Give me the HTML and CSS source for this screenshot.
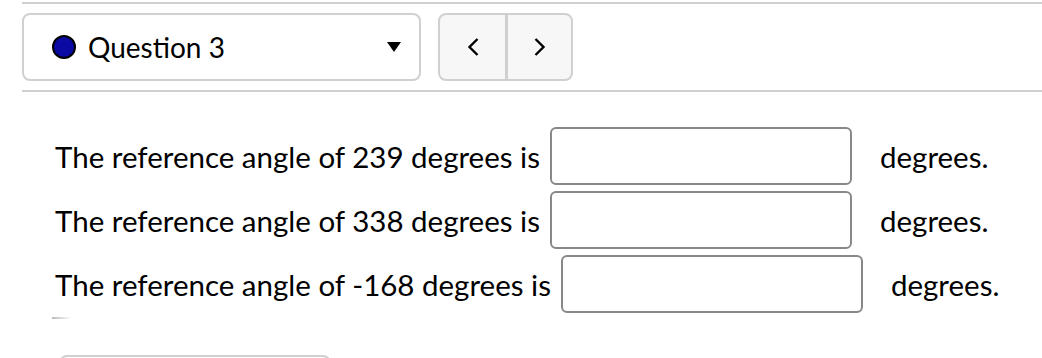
FILE: index.html
```html
<!DOCTYPE html>
<html lang="en">
<head>
    <meta charset="UTF-8">
    <meta name="viewport" content="width=device-width, initial-scale=1.0">
    <title>Question 3</title>
    <link rel="stylesheet" href="styles.css">
</head>
<body>
    <div class="question-nav">
        <div class="question-select">
            <span class="status-dot"></span>
            <span class="question-name">Question 3</span>
            <span class="caret"></span>
        </div>
        <div class="pager">
            <button class="pager-btn" aria-label="Previous">
                <svg width="12" height="20" viewBox="0 0 12 20"><path d="M10.5 2 L2.5 10 L10.5 18" fill="none" stroke="#000" stroke-width="2.4"/></svg>
            </button>
            <button class="pager-btn" aria-label="Next">
                <svg width="12" height="20" viewBox="0 0 12 20"><path d="M1.5 2 L9.5 10 L1.5 18" fill="none" stroke="#000" stroke-width="2.4"/></svg>
            </button>
        </div>
    </div>

    <div class="problem">
        <div class="answer-row">
            <span>The reference angle of 239 degrees is</span>
            <input type="text" class="answer">
            <span>degrees.</span>
        </div>
        <div class="answer-row">
            <span>The reference angle of 338 degrees is</span>
            <input type="text" class="answer">
            <span>degrees.</span>
        </div>
        <div class="answer-row">
            <span>The reference angle of -168 degrees is</span>
            <input type="text" class="answer">
            <span>degrees.</span>
        </div>
        <div class="fade-rule"></div>
        <button class="submit-btn"></button>
    </div>
</body>
</html>
```

FILE: styles.css
```css
body {
    font-family: 'Lato', 'Liberation Sans', sans-serif;
    margin: 0;
    padding: 0;
    background-color: #fff;
    color: #000;
    overflow: hidden;
}
.question-nav {
    display: flex;
    align-items: center;
    gap: 17px;
    margin: 2px 0 0 22px;
    padding: 9px 0;
    border-top: 2px solid #d0d0d0;
    border-bottom: 2px solid #d0d0d0;
}
.question-select {
    display: flex;
    align-items: center;
    box-sizing: border-box;
    width: 399px;
    height: 68px;
    padding: 0 18px 0 28px;
    border: 2px solid #d0d0d0;
    border-radius: 8px;
}
.status-dot {
    box-sizing: border-box;
    width: 24px;
    height: 24px;
    border-radius: 50%;
    background: #0a0aa3;
    border: 2px solid #000;
}
.question-name {
    flex: 1;
    margin-left: 12px;
    font-size: 28px;
}
.caret {
    width: 0;
    height: 0;
    border-left: 7px solid transparent;
    border-right: 7px solid transparent;
    border-top: 10px solid #000;
}
.pager {
    display: flex;
    box-sizing: border-box;
    height: 68px;
    border: 2px solid #d0d0d0;
    border-radius: 8px;
    background: #f7f7f7;
    overflow: hidden;
}
.pager-btn {
    display: flex;
    align-items: center;
    justify-content: center;
    width: 65px;
    border: none;
    background: transparent;
    padding: 0;
}
.pager-btn + .pager-btn {
    width: 66px;
    border-left: 3px solid #d0d0d0;
}
.problem {
    padding: 32px 0 0 55px;
}
.answer-row {
    display: flex;
    align-items: center;
    height: 64px;
    font-size: 29.5px;
}
.answer {
    box-sizing: border-box;
    width: 302px;
    height: 58px;
    margin: 0 28px 0 10px;
    border: 2px solid #888;
    border-radius: 6px;
    font-size: 28px;
}
.fade-rule {
    width: 20px;
    height: 2px;
    margin: 1px 0 0 -3px;
    background: linear-gradient(to right, #bbb, #fff);
}
.submit-btn {
    display: block;
    width: 272px;
    height: 50px;
    margin: 36px 0 0 4px;
    background: #fff;
    border: 2px solid #d0d0d0;
    border-radius: 8px;
}
```
